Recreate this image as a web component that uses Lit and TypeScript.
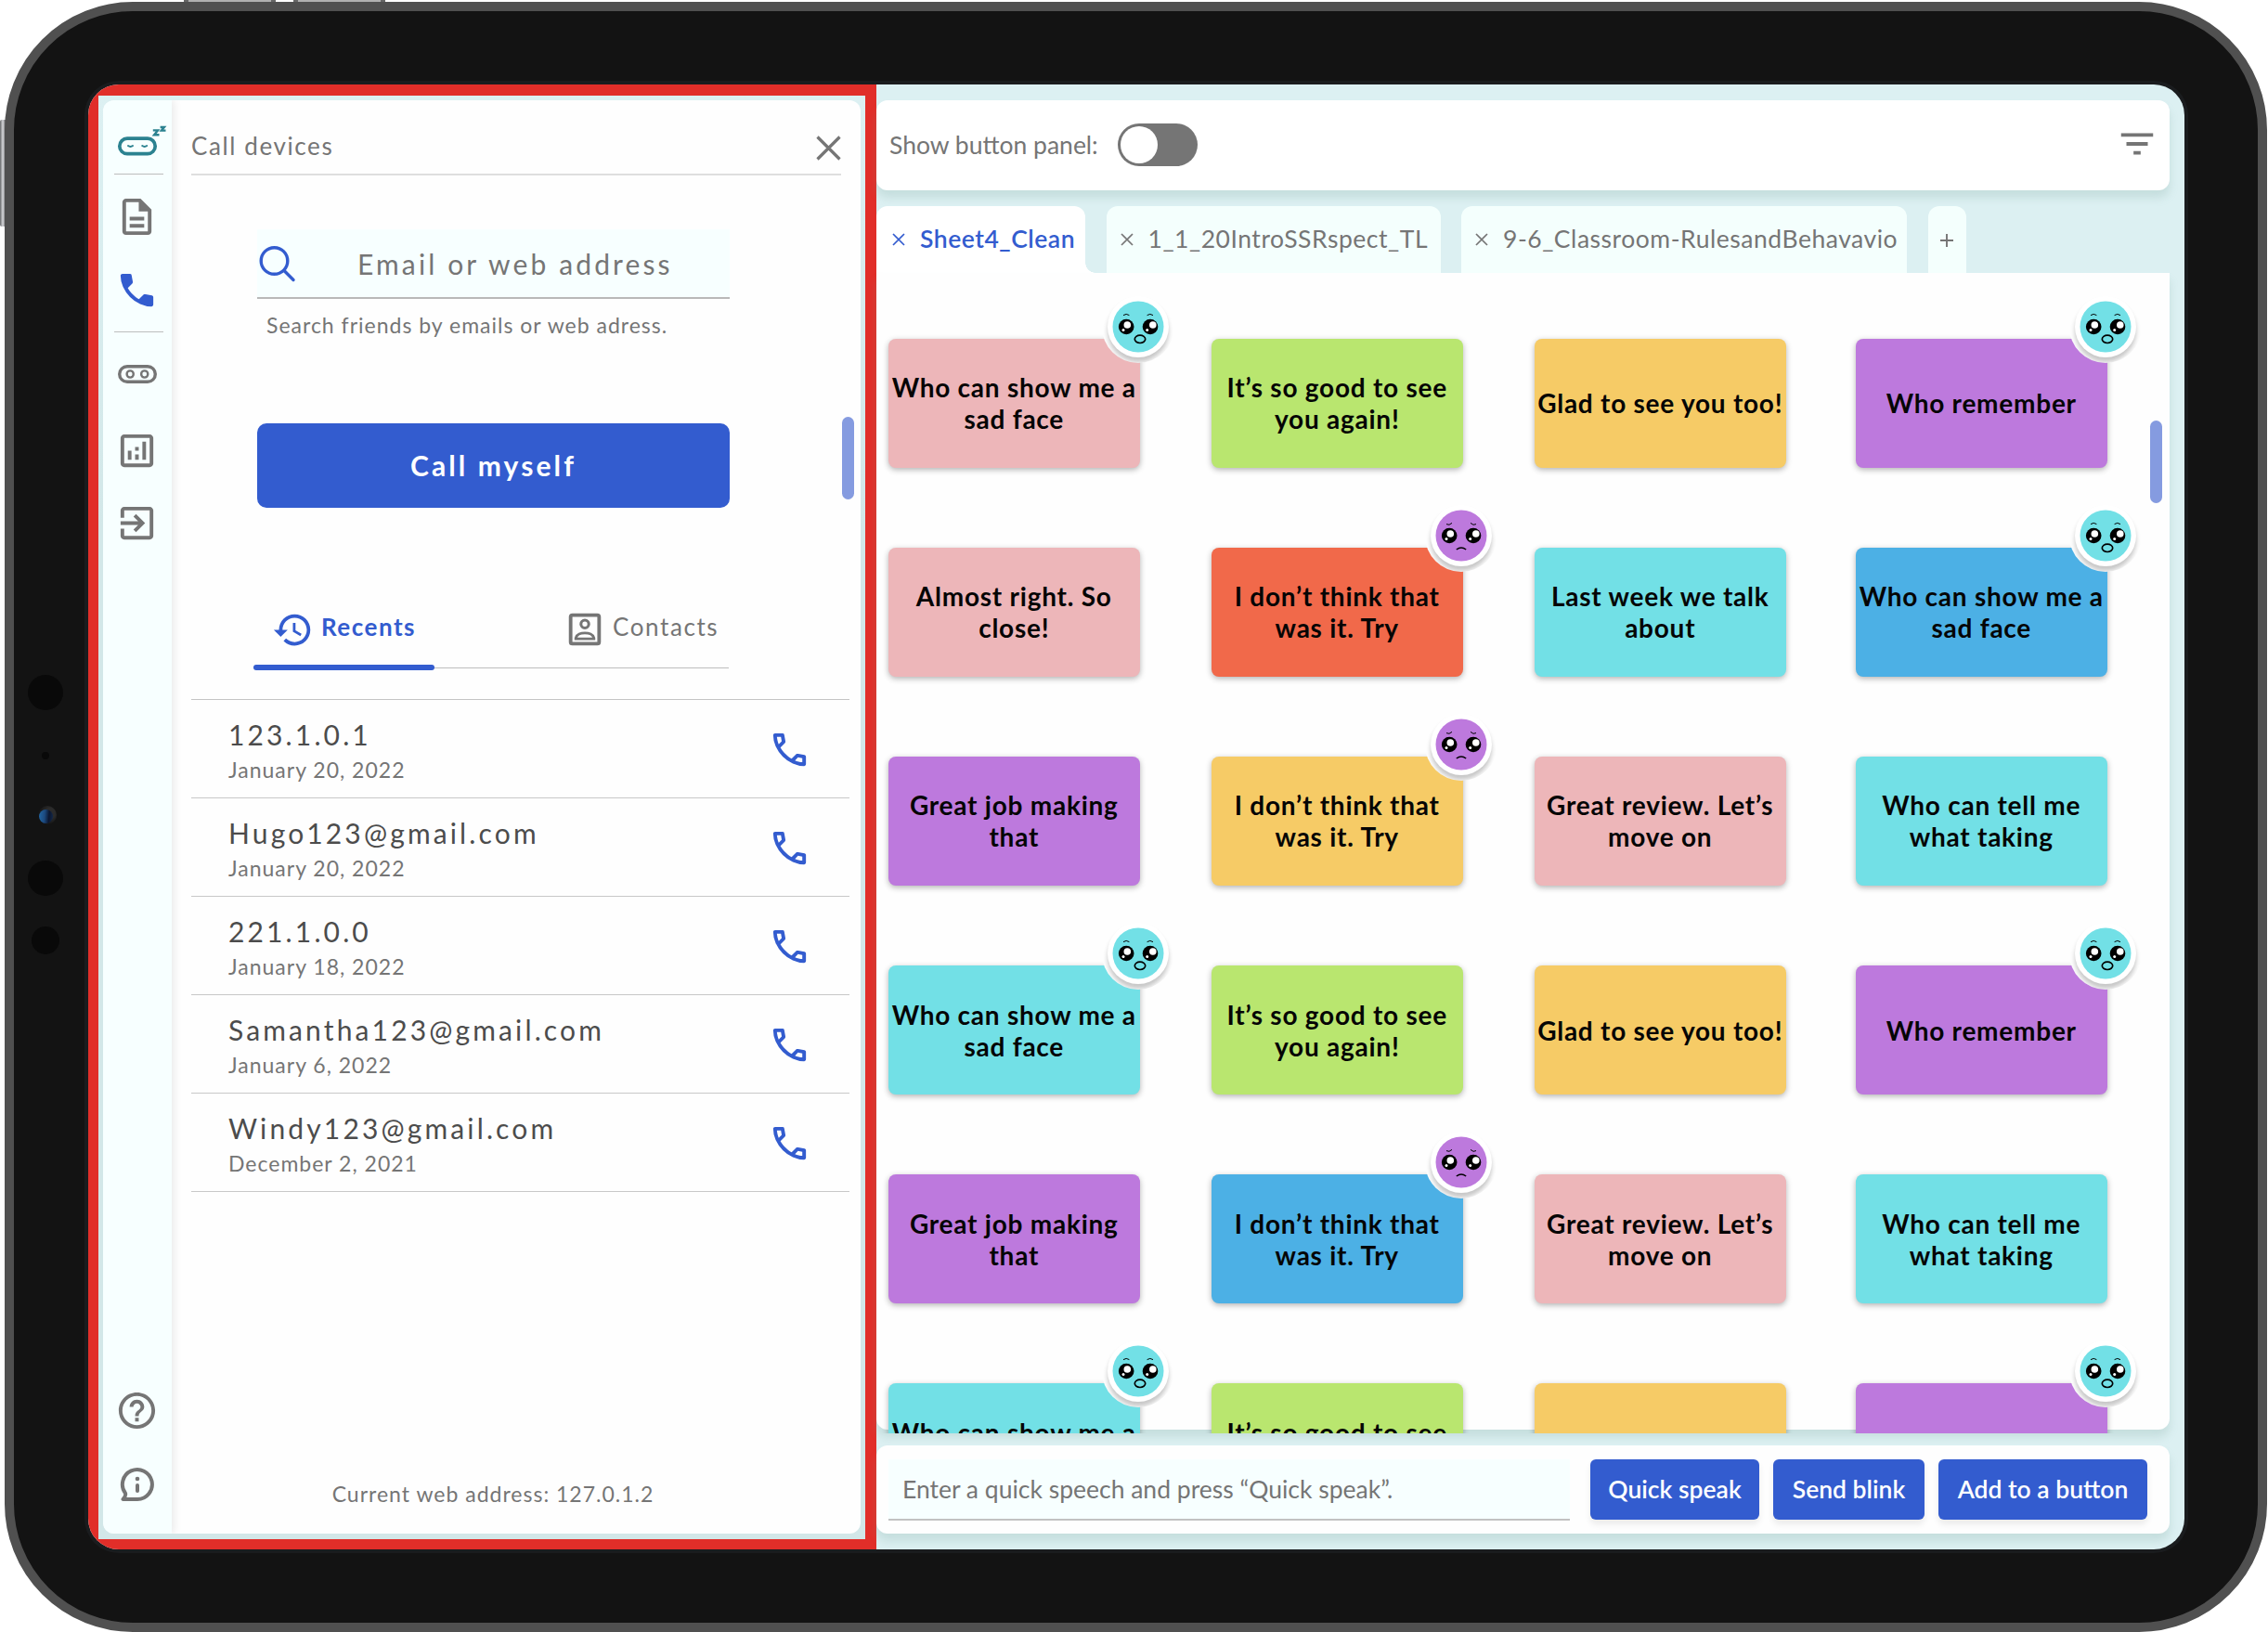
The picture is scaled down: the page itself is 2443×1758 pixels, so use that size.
import { LitElement, html, css, svg, nothing } from "lit";
import { customElement, property } from "lit/decorators.js";
import { classMap } from "lit/directives/class-map.js";

const PHONE =
  "M19.95 21q-3.125 0-6.175-1.362T8.225 15.775 4.362 10.225 3 4.05q0-.45.3-.75t.75-.3H8.1q.35 0 .625.238t.325.562l.65 3.5q.05.4-.025.675T9.4 8.45L6.975 10.9q.5.925 1.187 1.787t1.513 1.663q.775.775 1.625 1.438T13.1 17l2.35-2.35q.225-.225.588-.337t.712-.063l3.45.7q.35.1.575.363T21 15.9v4.05q0 .45-.3.75t-.75.3Z";
const PHONE_HOLES =
  "M6.025 9l1.65-1.65L7.25 5H5.025q.125 1.025.35 2.025T6.025 9Zm8.95 8.95q.975.425 1.988.675T19 18.95v-2.2l-2.35-.475-1.675 1.675Z";
const DOC =
  "M8 16h8v2H8zm0-4h8v2H8zm6-10H6c-1.1 0-2 .9-2 2v16c0 1.1.89 2 1.99 2H18c1.1 0 2-.9 2-2V8l-6-6zm4 18H6V4h7v5h5v11z";
const CHART =
  "M19 3H5c-1.1 0-2 .9-2 2v14c0 1.1.9 2 2 2h14c1.1 0 2-.9 2-2V5c0-1.1-.9-2-2-2zm0 16H5V5h14v14zM7 12h2v5H7zm8-5h2v10h-2zm-4 7h2v3h-2zm0-4h2v2h-2z";
const EXIT =
  "M10.09 15.59L11.5 17l5-5-5-5-1.41 1.41L12.67 11H3v2h9.67l-2.58 2.59zM19 3H5c-1.11 0-2 .9-2 2v4h2V5h14v14H5v-4H3v4c0 1.1.89 2 2 2h14c1.1 0 2-.9 2-2V5c0-1.1-.9-2-2-2z";
const HELP =
  "M11 18h2v-2h-2v2zm1-16C6.48 2 2 6.48 2 12s4.48 10 10 10 10-4.48 10-10S17.52 2 12 2zm0 18c-4.41 0-8-3.59-8-8s3.59-8 8-8 8 3.59 8 8-3.59 8-8 8zm0-14c-2.21 0-4 1.79-4 4h2c0-1.1.9-2 2-2s2 .9 2 2c0 2-3 1.75-3 5h2c0-2.25 3-2.5 3-5 0-2.21-1.79-4-4-4z";
const HISTORY =
  "M13 3a9 9 0 0 0-9 9H1l3.89 3.89.07.14L9 12H6c0-3.87 3.13-7 7-7s7 3.13 7 7-3.13 7-7 7c-1.93 0-3.68-.79-4.94-2.06l-1.42 1.42A8.954 8.954 0 0 0 13 21a9 9 0 0 0 0-18zm-1 5v5l4.28 2.54.72-1.21-3.5-2.08V8H12z";
const FILTER = "M3 6h18v2H3zM6 11h12v2H6zM10 16h4v2h-4z";

const icon = (d: string, cls: string) =>
  html`<svg class=${cls} viewBox="0 0 24 24" fill="currentColor" fill-rule="evenodd"><path d=${d}></path></svg>`;

type Mood = "wow" | "sad";
interface Card {
  text: string;
  tone: string;
  mood?: Mood;
}

const SHOW = "Who can show me a sad face";
const GOOD = "It’s so good to see you again!";
const GLAD = "Glad to see you too!";
const REMEMBER = "Who remember";
const JOB = "Great job making that";
const TRY = "I don’t think that was it. Try";
const REVIEW = "Great review. Let’s move on";
const TELL = "Who can tell me what taking";

const CARDS: Card[] = [
  { text: SHOW, tone: "pink", mood: "wow" },
  { text: GOOD, tone: "green" },
  { text: GLAD, tone: "yellow" },
  { text: REMEMBER, tone: "purple", mood: "wow" },
  { text: "Almost right. So close!", tone: "pink" },
  { text: TRY, tone: "orange", mood: "sad" },
  { text: "Last week we talk about", tone: "cyan" },
  { text: SHOW, tone: "blue", mood: "wow" },
  { text: JOB, tone: "purple" },
  { text: TRY, tone: "yellow", mood: "sad" },
  { text: REVIEW, tone: "pink" },
  { text: TELL, tone: "cyan" },
  { text: SHOW, tone: "cyan", mood: "wow" },
  { text: GOOD, tone: "green" },
  { text: GLAD, tone: "yellow" },
  { text: REMEMBER, tone: "purple", mood: "wow" },
  { text: JOB, tone: "purple" },
  { text: TRY, tone: "blue", mood: "sad" },
  { text: REVIEW, tone: "pink" },
  { text: TELL, tone: "cyan" },
  { text: SHOW, tone: "cyan", mood: "wow" },
  { text: GOOD, tone: "green" },
  { text: "", tone: "yellow" },
  { text: "", tone: "purple", mood: "wow" },
];

const RECENTS = [
  { name: "123.1.0.1", date: "January 20, 2022" },
  { name: "Hugo123@gmail.com", date: "January 20, 2022" },
  { name: "221.1.0.0", date: "January 18, 2022" },
  { name: "Samantha123@gmail.com", date: "January 6, 2022" },
  { name: "Windy123@gmail.com", date: "December 2, 2021" },
];

/** Round emoji badge pinned to the corner of a card. */
@customElement("face-badge")
export class FaceBadge extends LitElement {
  @property() mood: Mood = "wow";

  static styles = css`
    :host {
      display: block;
      width: 78px;
      height: 78px;
      border-radius: 50%;
      background: #fefefe;
    }
    .ring {
      width: 66px;
      height: 66px;
      margin: 6px;
      border-radius: 50%;
      background: #fff;
      box-shadow: 0 5px 5px rgba(0, 0, 0, 0.22);
    }
    .clip {
      height: 78px;
      border-radius: 50%;
      overflow: hidden;
      display: flex;
      flex: none;
    }
    svg {
      display: block;
    }
  `;

  render() {
    const sad = this.mood === "sad";
    return html`<div class="clip"><div class="ring">
      <svg width="66" height="66" viewBox="-33 -33 66 66">
        <circle r="27.5" fill=${sad ? "#bd79dd" : "#72e0e6"}></circle>
        <circle cx="-12.8" r="8.3"></circle>
        <circle cx="13" r="8.3"></circle>
        <g fill="#fff">
          <circle cx="-11.7" cy="-2" r="3.8"></circle>
          <circle cx="15.8" cy="-2" r="3.8"></circle>
          <circle cx="-16" cy="3.4" r="1.5"></circle>
          <circle cx="9.7" cy="3.4" r="1.5"></circle>
        </g>
        <g fill="none" stroke="#000">
          ${sad
            ? svg`<path stroke-width="1" d="M-16 -12.4q3 2 6 -1.2M16 -12.4q-3 2 -6 -1.2"></path>
              <path stroke-width="1.5" d="M-5.2 15Q0 11.2 5.2 15"></path>`
            : svg`<path stroke-width="1" d="M-16 -12.4q3.2 -2.4 6.4 0M9.6 -12.4q3.2 -2.4 6.4 0"></path>
              <ellipse cx="2" cy="13.3" rx="5.7" ry="4.2" stroke-width="1.7"></ellipse>`}
        </g>
      </svg>
    </div></div>`;
  }
}

@customElement("app-root")
export class AppRoot extends LitElement {
  static styles = css`
    :host {
      display: block;
      position: relative;
      width: 2443px;
      height: 1758px;
      overflow: hidden;
      background: #fff;
      font-family: Lato, "Open Sans", sans-serif;
      line-height: 1.2;
      color: #757575;
    }
    * {
      box-sizing: border-box;
    }
    svg {
      display: block;
      flex: none;
    }

    /* tablet body */
    .key {
      position: absolute;
      background: #77797b;
    }
    .key.power {
      left: 0;
      top: 129px;
      width: 12px;
      height: 115px;
      background: linear-gradient(90deg, #77797b 0 1px, #c4c5c8 2px 4px, #77797b 5px);
      border-radius: 2px;
    }
    .key.up,
    .key.down {
      top: 0;
      width: 99px;
      height: 6px;
      background: #b0b0b0;
      border: solid #666;
      border-width: 0 5px;
    }
    .key.up { left: 198px; }
    .key.down { left: 316px; }
    .device {
      position: relative;
      width: 2437px;
      height: 1756px;
      margin-left: 5px;
      top: 2px;
      border: 10px solid #505050;
      border-radius: 138px;
      background: #131313;
      padding: 76px 77px 77px 77px;
    }
    .lens {
      position: absolute;
      border-radius: 50%;
      background: #090909;
    }
    .lens.a { left: 15px; top: 715px; width: 38px; height: 38px; }
    .lens.b { left: 30px; top: 798px; width: 8px; height: 8px; }
    .lens.c {
      left: 26px;
      top: 856px;
      width: 20px;
      height: 20px;
      background: radial-gradient(circle at 65% 40%, #2b2b2b 0 30%, #191919 60%, #131313 75%);
    }
    .lens.d {
      left: 27px;
      top: 860px;
      width: 15px;
      height: 15px;
      background: linear-gradient(95deg, #20609c 10%, #1c4a80 40%, #0b1630 70%, #12294c 100%);
    }
    .lens.e { left: 15px; top: 915px; width: 38px; height: 38px; }
    .lens.f { left: 19px; top: 986px; width: 30px; height: 30px; }

    .screen {
      display: flex;
      margin: 3px;
      width: 2258px;
      height: 1578px;
      border-radius: 33px;
      overflow: hidden;
      background: #dcf0f2;
      box-shadow: 0 0 0 4px #1a1c1e;
    }

    /* left, outlined area */
    .outlined {
      flex: none;
      width: 849px;
      border: solid #e12e29;
      border-width: 12px 12px 11px 11px;
      padding: 5px 5px 6px 5px;
      display: flex;
      background: linear-gradient(#dcf0f2, #d2e7e8 30%);
    }
    .panel {
      flex: 1;
      display: flex;
      border-radius: 12px;
      overflow: hidden;
      background: #fefefe;
    }
    .rail {
      flex: none;
      position: relative;
      width: 74px;
      padding-right: 1px;
      display: flex;
      flex-direction: column;
      align-items: center;
      background: #f7ffff;
      box-shadow: 2px 0 9px rgba(0, 0, 0, 0.09);
    }
    .logo { width: 58px; height: 36px; margin: 25px 0 0 9px; color: #2b8290; }
    .sep { width: 53px; height: 1px; background: #bdbdbd; margin: 18px 0 0 3px; }
    .sep.low { margin-top: 21px; }
    .i47 { width: 47px; height: 47px; }
    .doc { margin-top: 22px; }
    .phone { margin-top: 32px; color: #335ccf; }
    .goggles { width: 42px; height: 20px; margin-top: 35px; }
    .chart { margin-top: 49px; }
    .exit { margin-top: 31px; }
    .help { margin-top: auto; }
    .info { width: 38px; height: 38px; margin: 37px 0 34px; }

    .body {
      flex: 1;
      display: flex;
      flex-direction: column;
      position: relative;
    }
    .head {
      display: flex;
      align-items: center;
      justify-content: space-between;
      height: 81px;
      margin: 0 21px 0 21px;
      padding-top: 21px;
      border-bottom: 2px solid #dedede;
      font-size: 26px;
      letter-spacing: 1.6px;
    }
    .close { width: 27px; height: 27px; margin-top: 3px; }
    .search {
      display: flex;
      align-items: center;
      width: 509px;
      height: 75px;
      margin: 58px 0 0 92px;
      background: #f7ffff;
      border-bottom: 2px solid #b9b9b9;
      font-size: 30px;
      letter-spacing: 3.13px;
    }
    .mag { width: 40px; height: 40px; margin: 0 66px 0 2px; color: #335ccf; }
    .hint {
      height: 27px;
      margin: 15px 0 0 102px;
      font-size: 23px;
      letter-spacing: 1px;
    }
    .self {
      display: flex;
      align-items: center;
      justify-content: center;
      width: 509px;
      height: 91px;
      margin: 92px 0 0 92px;
      padding-bottom: 1px;
      border-radius: 10px;
      background: #335ccf;
      color: #fff;
      font-size: 30px;
      font-weight: 700;
      letter-spacing: 3.1px;
    }
    .modes {
      display: flex;
      width: 512px;
      height: 79px;
      margin: 94px 0 0 88px;
      border-bottom: 1px solid #bdbdbd;
      font-size: 26px;
      letter-spacing: 1.6px;
    }
    .mode {
      position: relative;
      display: flex;
      align-items: center;
      height: 70px;
    }
    .mode.on {
      width: 195px;
      padding-left: 20px;
      margin-right: 139px;
      color: #335ccf;
      font-weight: 700;
      letter-spacing: 1.5px;
    }
    .mode.on::after {
      content: "";
      position: absolute;
      left: 0;
      bottom: -11px;
      width: 195px;
      height: 6px;
      border-radius: 3px;
      background: #335ccf;
    }
    .hist { width: 45px; height: 45px; margin-right: 8px; margin-top: 4px; }
    .card-i { width: 46px; height: 46px; margin-right: 7px; margin-top: 4px; }
    .list {
      margin: 33px 12px 0 21px;
      border-top: 1px solid #c4c4c4;
    }
    .row {
      display: flex;
      align-items: center;
      justify-content: space-between;
      height: 106px;
      padding: 0 40px 0 40px;
      border-bottom: 1px solid #c8c8c8;
    }
    .name { margin-top: 2px; font-size: 30px; line-height: 36px; letter-spacing: 3.14px; color: #4c4c4c; }
    .date { font-size: 23px; line-height: 28px; margin-top: 6px; letter-spacing: 1px; }
    .call { width: 47px; height: 47px; color: #335ccf; margin: 2px 1px 0 0; }
    .addr {
      margin: auto 0 28px;
      padding-right: 50px;
      text-align: center;
      font-size: 23px;
      letter-spacing: 1px;
    }
    .thumb {
      position: absolute;
      width: 13px;
      height: 89px;
      border-radius: 7px;
      background: #859be0;
    }
    .body > .thumb { left: 721.5px; top: 341px; }

    /* right area */
    .right {
      flex: 1;
      display: flex;
      flex-direction: column;
      padding: 17px 17px 16px 0;
    }
    .bar {
      display: flex;
      align-items: center;
      height: 97px;
      border-radius: 12px;
      background: #fff;
      padding: 0 12px 0 14px;
      font-size: 26.5px;
      box-shadow: 0 8px 10px rgba(120, 160, 150, 0.22);
    }
    .toggle {
      width: 86px;
      height: 46px;
      margin: -1px auto 0 21px;
      border-radius: 23px;
      background: #757575;
      padding: 3px;
    }
    .knob { width: 40px; height: 40px; border-radius: 50%; background: #fff; }
    .filter { width: 46px; height: 46px; margin-top: -3px; }
    .tabs {
      display: flex;
      height: 72px;
      margin-top: 17px;
      font-size: 26.5px;
      letter-spacing: 0.53px;
    }
    .tab {
      position: relative;
      display: flex;
      align-items: center;
      padding: 0 0 0 15px;
      border-radius: 12px 12px 0 0;
      background: #f4fffd;
      white-space: nowrap;
    }
    .tab svg { width: 14px; height: 14px; margin: 0 16px 0 0; }
    .tab.one { width: 225px; padding-left: 17px; margin-right: 22.5px; background: #fff; color: #335ccf; font-weight: 600; }
    .tab.one::after {
      content: "";
      position: absolute;
      left: 225px;
      bottom: 0;
      width: 11px;
      height: 11px;
      background: radial-gradient(circle at 100% 0, transparent 10.5px, #fff 11px);
    }
    .tab.two { width: 360px; margin-right: 22.5px; }
    .tab.three { width: 480px; margin-right: 23px; }
    .tab.plus { width: 41px; padding-left: 13px; }
    .tab.plus svg { margin: 2px 0 0; }
    .board {
      position: relative;
      height: 1246px;
      border-radius: 0 0 12px 12px;
      background: #fefefe;
      box-shadow: 0 8px 10px rgba(120, 160, 150, 0.22);
    }
    .view {
      height: 1250px;
      padding: 71px 0 0 13px;
      overflow: hidden;
    }
    .grid {
      display: grid;
      grid-template-columns: 348px 348px 346px 270.5px;
      grid-auto-rows: 138.5px;
      row-gap: 86.6px;
    }
    .card {
      position: relative;
      width: 270.5px;
      display: flex;
      align-items: center;
      justify-content: center;
      text-align: center;
      border-radius: 8px;
      color: #050505;
      font-size: 28px;
      font-weight: 700;
      line-height: 34px;
      letter-spacing: 0.76px;
      box-shadow: 0 2px 6px rgba(0, 0, 0, 0.3);
    }
    .pink { background: #edb6b9; }
    .green { background: #b9e66f; }
    .yellow { background: #f6cb66; }
    .purple { background: #bd79dd; }
    .orange { background: #f1694a; }
    .cyan { background: #72e0e6; }
    .blue { background: #4cb0e5; }
    face-badge { position: absolute; right: -37.5px; top: -52.5px; letter-spacing: 0; }
    .board > .thumb { left: 1372px; top: 159px; }

    .speech {
      display: flex;
      height: 95px;
      margin-top: 17px;
      padding: 15px 24px 0 13px;
      border-radius: 12px;
      background: #fefefe;
      font-size: 26.5px;
      box-shadow: 0 8px 10px rgba(120, 160, 150, 0.22);
    }
    .field {
      width: 734px;
      height: 66px;
      padding: 17px 0 0 15px;
      margin-right: 22px;
      background: #f7ffff;
      border-bottom: 2px solid #c2c2c2;
    }
    .btn {
      display: flex;
      align-items: center;
      justify-content: center;
      height: 65px;
      border-radius: 6px;
      background: #335ccf;
      color: #fff;
      font-weight: 600;
      box-shadow: 0 5px 7px rgba(0, 0, 0, 0.08);
    }
    .btn.q { width: 182px; margin-right: 15px; }
    .btn.s { width: 163px; margin-right: 15px; }
    .btn.a { width: 225px; }
  `;

  private cross() {
    return html`<svg viewBox="0 0 14 14" fill="none" stroke="currentColor" stroke-width="1.7">
      <path d="M1 1L13 13M13 1L1 13"></path>
    </svg>`;
  }

  private rail() {
    return html`<nav class="rail">
      <svg class="logo" viewBox="123 133 58 36" fill="none" stroke="currentColor">
        <rect x="128.8" y="149.2" width="38.4" height="16.4" rx="8.2" stroke-width="3.7"></rect>
        <path stroke-width="2" stroke-linecap="round" d="M138 157q2.5 1.8 5 0M153.2 157q2.5 1.8 5 0"></path>
        <path stroke-width="2.4" d="M164.8 140.4h5.2l-3.9 4.8h5.4M172.6 137h4.3l-3 3.600h4.6"></path>
      </svg>
      <div class="sep"></div>
      ${icon(DOC, "i47 doc")} ${icon(PHONE, "i47 phone")}
      <div class="sep low"></div>
      <svg class="goggles" viewBox="0 0 42 20" fill="none" stroke="currentColor">
        <rect x="1.7" y="1.7" width="38.6" height="16.6" rx="8.3" stroke-width="3.4"></rect>
        <circle cx="13.2" cy="10" r="3.6" stroke-width="2.4"></circle>
        <circle cx="28.7" cy="10" r="3.6" stroke-width="2.4"></circle>
      </svg>
      ${icon(CHART, "i47 chart")} ${icon(EXIT, "i47 exit")} ${icon(HELP, "i47 help")}
      <svg class="info" viewBox="0 0 38 38" fill="none" stroke="currentColor" stroke-linecap="round">
        <path stroke-width="4" stroke-linejoin="round" d="M19 35A16 16 0 1 0 6 28.5Q7 31 3.5 35Z"></path>
        <path stroke-width="4" d="M19 20V26"></path>
        <circle cx="19" cy="13" r="2.3" fill="currentColor" stroke="none"></circle>
      </svg>
    </nav>`;
  }

  private panel() {
    return html`<section class="body">
      <header class="head">
        <span>Call devices</span>
        <svg class="close" viewBox="0 0 27 27" fill="none" stroke="currentColor" stroke-width="3.2">
          <path d="M1.5 1.5L25.5 25.5M25.5 1.5L1.5 25.5"></path>
        </svg>
      </header>
      <div class="search">
        <svg class="mag" viewBox="0 0 40 40" fill="none" stroke="currentColor" stroke-width="3.4" stroke-linecap="round">
          <circle cx="16.5" cy="17" r="14.3"></circle>
          <path d="M27 27.5L37 37.5"></path>
        </svg>
        <span>Email or web address</span>
      </div>
      <div class="hint">Search friends by emails or web adress.</div>
      <div class="self">Call myself</div>
      <div class="modes">
        <div class="mode on">${icon(HISTORY, "hist")}<span>Recents</span></div>
        <div class="mode">
          <svg class="card-i" viewBox="0 0 24 24" fill="none" stroke="currentColor" stroke-width="2">
            <rect x="4" y="4" width="16" height="16" rx="1"></rect>
            <circle cx="12" cy="9" r="2.2" stroke-width="1.6"></circle>
            <path stroke-width="1.5" d="M6.9 17.3V16.8C7.3 14.9 9.8 14 12 14S16.7 14.9 17.1 16.8V17.3Z"></path>
          </svg>
          <span>Contacts</span>
        </div>
      </div>
      <div class="list">
        ${RECENTS.map(
          (r) => html`<div class="row">
            <div>
              <div class="name">${r.name}</div>
              <div class="date">${r.date}</div>
            </div>
            ${icon(PHONE + PHONE_HOLES, "call")}
          </div>`
        )}
      </div>
      <div class="addr">Current web address: 127.0.1.2</div>
      <div class="thumb"></div>
    </section>`;
  }

  render() {
    return html`
      <div class="key power"></div>
      <div class="key up"></div>
      <div class="key down"></div>
      <div class="device">
        ${["a", "b", "c", "d", "e", "f"].map((n) => html`<div class="lens ${n}"></div>`)}
        <div class="screen">
          <div class="outlined">
            <div class="panel">${this.rail()} ${this.panel()}</div>
          </div>
          <main class="right">
            <div class="bar">
              <span>Show button panel:</span>
              <div class="toggle"><div class="knob"></div></div>
              ${icon(FILTER, "filter")}
            </div>
            <div class="tabs">
              <div class="tab one">${this.cross()}<span>Sheet4_Clean</span></div>
              <div class="tab two">${this.cross()}<span>1_1_20IntroSSRspect_TL</span></div>
              <div class="tab three">${this.cross()}<span>9-6_Classroom-RulesandBehavavio</span></div>
              <div class="tab plus">
                <svg viewBox="0 0 14 14" fill="none" stroke="currentColor" stroke-width="1.9"><path d="M7 0V14M0 7H14"></path></svg>
              </div>
            </div>
            <div class="board">
              <div class="view">
                <div class="grid">
                  ${CARDS.map(
                    (c) => html`<div class=${classMap({ card: true, [c.tone]: true })}>
                      <span>${c.text}</span>
                      ${c.mood ? html`<face-badge .mood=${c.mood}></face-badge>` : nothing}
                    </div>`
                  )}
                </div>
              </div>
              <div class="thumb"></div>
            </div>
            <div class="speech">
              <div class="field">Enter a quick speech and press “Quick speak”.</div>
              <div class="btn q">Quick speak</div>
              <div class="btn s">Send blink</div>
              <div class="btn a">Add to a button</div>
            </div>
          </main>
        </div>
      </div>
    `;
  }
}
